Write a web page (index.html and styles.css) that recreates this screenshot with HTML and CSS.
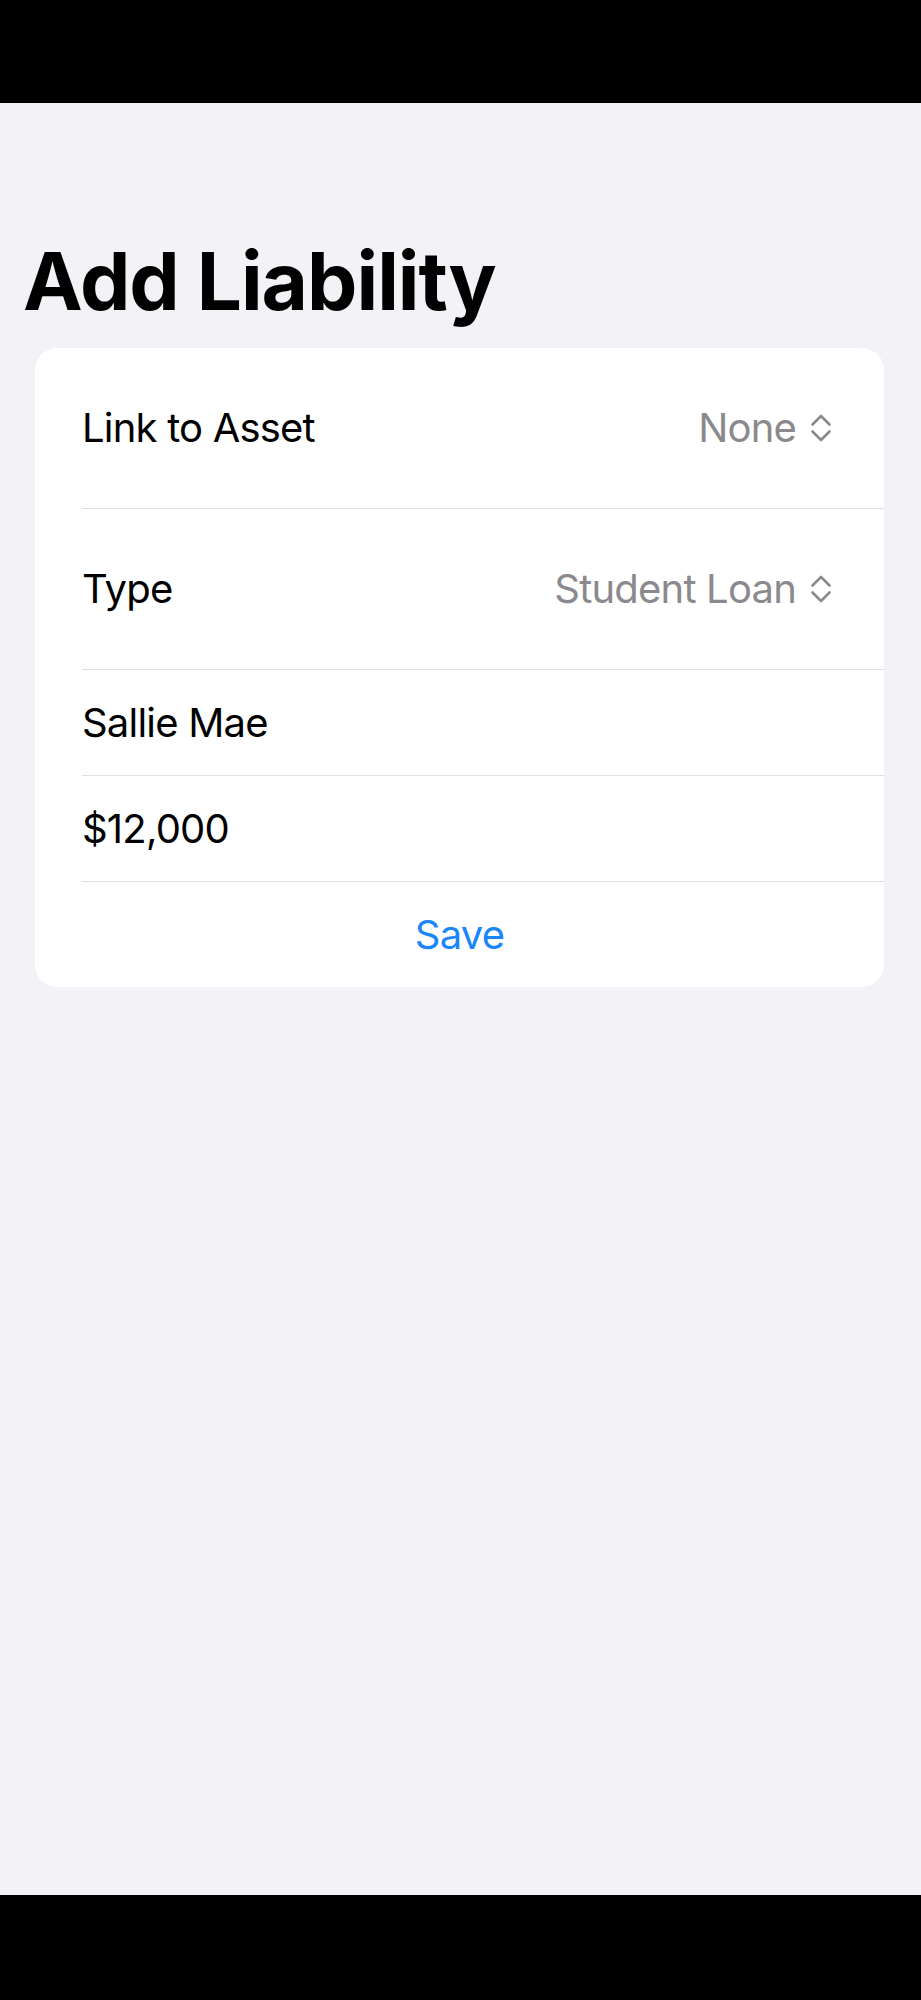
FILE: index.html
```html
<!DOCTYPE html>
<html lang="en">
<head>
<meta charset="utf-8">
<title>Add Liability</title>
<link rel="stylesheet" href="styles.css">
</head>
<body>
<div class="screen">
  <div class="bar bar-top"></div>
  <main class="content">
    <h1 class="title">Add Liability</h1>
    <section class="card">
      <div class="row row-tall">
        <div class="row-inner">
          <span class="label">Link to Asset</span>
          <span class="picker">
            <span class="value">None</span>
            <svg class="chev" width="22" height="30" viewBox="0 0 22 30" aria-hidden="true">
              <path d="M2.5 11.5 L11 3 L19.5 11.5 M2.5 18.5 L11 27 L19.5 18.5" fill="none" stroke="#8a8a8e" stroke-width="2.6" stroke-linecap="round" stroke-linejoin="round"/>
            </svg>
          </span>
        </div>
      </div>
      <div class="row row-tall">
        <div class="row-inner">
          <span class="label">Type</span>
          <span class="picker">
            <span class="value">Student Loan</span>
            <svg class="chev" width="22" height="30" viewBox="0 0 22 30" aria-hidden="true">
              <path d="M2.5 11.5 L11 3 L19.5 11.5 M2.5 18.5 L11 27 L19.5 18.5" fill="none" stroke="#8a8a8e" stroke-width="2.6" stroke-linecap="round" stroke-linejoin="round"/>
            </svg>
          </span>
        </div>
      </div>
      <div class="row">
        <div class="row-inner">
          <span class="label">Sallie Mae</span>
        </div>
      </div>
      <div class="row">
        <div class="row-inner">
          <span class="label">$12,000</span>
        </div>
      </div>
      <div class="row row-last">
        <div class="row-inner row-center">
          <span class="save">Save</span>
        </div>
      </div>
    </section>
  </main>
  <div class="bar bar-bottom"></div>
</div>
</body>
</html>
```
FILE: styles.css
```css
* { box-sizing: border-box; }
html, body {
  margin: 0;
  padding: 0;
  background: #f2f2f7;
}
body {
  font-family: Inter, "Noto Sans", "Liberation Sans", sans-serif;
  color: #000;
}
.screen {
  display: flex;
  flex-direction: column;
  min-height: 2000px;
}
.bar { background: #000; flex: none; }
.bar-top { height: 103px; }
.bar-bottom { height: 105px; }
.content {
  flex: 1;
  padding-top: 130px;
}
.title {
  margin: 0;
  padding-left: 23px;
  font-size: 80px;
  line-height: 96px;
  font-weight: 700;
  letter-spacing: -1px;
}
.card {
  margin: 19px 37px 0 35px;
  background: #fff;
  border-radius: 22px;
  overflow: hidden;
}
.row {
  padding-left: 47px;
}
.row-inner {
  display: flex;
  align-items: center;
  justify-content: space-between;
  height: 106px;
  border-bottom: 1px solid #dedee3;
  padding-right: 52px;
}
.row-tall .row-inner { height: 161px; }
.row-last .row-inner {
  border-bottom: none;
  height: 105px;
}
.row-center {
  justify-content: center;
  margin-left: -47px;
  padding-right: 0;
}
.label,
.value,
.save {
  font-size: 40px;
  line-height: 1.2;
  letter-spacing: -0.8px;
}
.picker {
  display: flex;
  align-items: center;
  gap: 14px;
}
.value { color: #8a8a8e; }
.chev { display: block; flex: none; }
.save { color: #1a86f9; }
```
